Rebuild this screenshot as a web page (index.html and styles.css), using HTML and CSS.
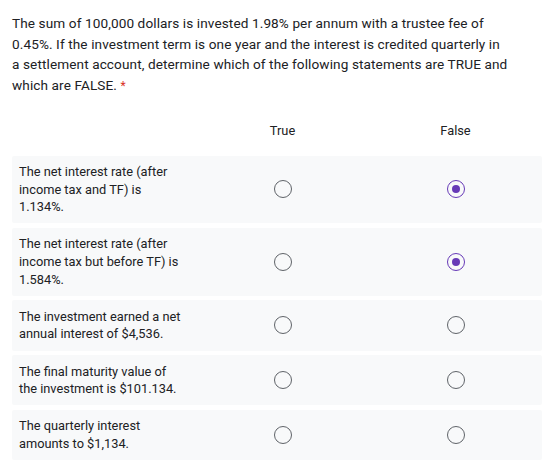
FILE: index.html
```html
<!DOCTYPE html>
<html>
<head>
<meta charset="utf-8">
<link rel="stylesheet" href="styles.css">
</head>
<body>
<div class="question">
  <div class="title">The sum of 100,000 dollars is invested 1.98% per annum with a trustee fee of 0.45%. If the investment term is one year and the interest is credited quarterly in a settlement account, determine which of the following statements are TRUE and which are FALSE. <span class="req">*</span></div>
  <div class="grid">
    <div class="head">
      <div class="label"></div>
      <div class="col">True</div>
      <div class="col">False</div>
    </div>
    <div class="row">
      <div class="label">The net interest rate (after income tax and TF) is 1.134%.</div>
      <div class="col"><span class="radio"></span></div>
      <div class="col"><span class="radio checked"></span></div>
    </div>
    <div class="row">
      <div class="label">The net interest rate (after income tax but before TF) is 1.584%.</div>
      <div class="col"><span class="radio"></span></div>
      <div class="col"><span class="radio checked"></span></div>
    </div>
    <div class="row">
      <div class="label">The investment earned a net annual interest of $4,536.</div>
      <div class="col"><span class="radio"></span></div>
      <div class="col"><span class="radio"></span></div>
    </div>
    <div class="row">
      <div class="label">The final maturity value of the investment is $101.134.</div>
      <div class="col"><span class="radio"></span></div>
      <div class="col"><span class="radio"></span></div>
    </div>
    <div class="row">
      <div class="label">The quarterly interest amounts to $1,134.</div>
      <div class="col"><span class="radio"></span></div>
      <div class="col"><span class="radio"></span></div>
    </div>
  </div>
</div>
</body>
</html>
```
FILE: styles.css
```css
html, body {
  margin: 0;
  padding: 0;
  background: #ffffff;
}
.question {
  padding: 13px 10px 0 12px;
  color: #202124;
}
.title {
  max-width: 497px;
  font-family: Roboto, "Liberation Sans", sans-serif;
  font-size: 13.6px;
  line-height: 20.6px;
  letter-spacing: 0.1px;
}
.req {
  color: #d93025;
  font-size: 12px;
}
.grid {
  margin-top: 26px;
  display: flex;
  flex-direction: column;
  gap: 4.6px;
  font-family: Roboto, "Liberation Sans", sans-serif;
  font-size: 12.8px;
  line-height: 17.6px;
}
.head, .row {
  display: grid;
  grid-template-columns: 184px 1fr 1fr;
  align-items: center;
}
.head {
  margin-bottom: 11px;
}
.row {
  background: #f8f9fa;
  border-radius: 2px;
  padding: 7.5px 0;
}
.label {
  padding: 0 11px 0 7px;
}
.col {
  display: flex;
  justify-content: center;
}
.radio {
  box-sizing: border-box;
  width: 18px;
  height: 18px;
  border: 1.3px solid #5f6368;
  border-radius: 50%;
  display: flex;
  align-items: center;
  justify-content: center;
}
.radio.checked {
  border-color: #673ab7;
}
.radio.checked::after {
  content: "";
  width: 8px;
  height: 8px;
  border-radius: 50%;
  background: #673ab7;
}
```
